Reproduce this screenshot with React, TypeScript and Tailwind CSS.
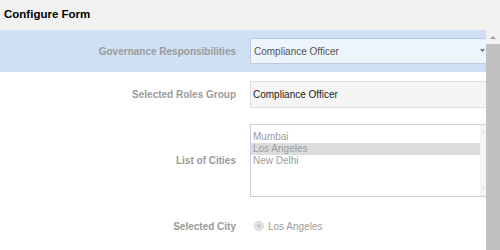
const cities = ['Mumbai', 'Los Angeles', 'New Delhi']

function Label({ text }: { text: string }) {
  return (
    <div className="w-[236px] shrink-0 text-right text-[10px] font-bold text-[#9a9a9a]">{text}</div>
  )
}

export default function App() {
  return (
    <div className="w-[500px] h-[250px] flex flex-col overflow-hidden bg-white font-['Liberation_Sans',Arial,sans-serif]">
      <div className="h-[30px] shrink-0 flex items-center px-[4px] bg-[#f1f1f1] text-[11.5px] font-bold text-black">
        Configure Form
      </div>
      <div className="flex flex-1 min-h-0">
        <div className="flex-1 overflow-hidden">
          {/* Governance Responsibilities */}
          <div className="h-[42px] flex items-center bg-[#cfe0f5]">
            <Label text="Governance Responsibilities" />
            <div className="relative ml-[14px] w-[238px] h-[26px] shrink-0 flex items-center pl-[3px] border border-[#b9cce4] bg-[#eef4fc] text-[10px] text-[#555]">
              Compliance Officer
              <span className="absolute right-[3px] top-[9px] w-[3px] h-[3px] border-r border-b border-[#333] rotate-45" />
            </div>
          </div>

          {/* Selected Roles Group */}
          <div className="h-[45px] flex items-center">
            <Label text="Selected Roles Group" />
            <div className="ml-[14px] w-[238px] h-[27px] shrink-0 flex items-center pl-[2px] border border-[#dedede] bg-[#f5f5f5] text-[10px] text-[#222]">
              Compliance Officer
            </div>
          </div>

          {/* List of Cities */}
          <div className="h-[87px] flex items-center">
            <Label text="List of Cities" />
            <div className="ml-[14px] w-[238px] h-[73px] shrink-0 flex border border-[#c6d1e2] bg-white">
              <div className="flex-1 pt-[6px]">
                {cities.map((c) => (
                  <div
                    key={c}
                    className={`h-[12px] leading-[12px] pl-[2px] text-[10px] text-[#9c9c9c] ${c === 'Los Angeles' ? 'bg-[#dcdcdc]' : ''}`}
                  >
                    {c}
                  </div>
                ))}
              </div>
              <div className="w-[6px] bg-[#f4f4f4] flex flex-col justify-between items-center py-[7px] mr-[1px]">
                <span className="w-[1px] h-[1px] bg-[#aaa]" />
                <span className="w-[1px] h-[1px] bg-[#aaa]" />
              </div>
            </div>
          </div>

          {/* Selected City */}
          <div className="h-[44px] flex items-center">
            <Label text="Selected City" />
            <div className="ml-[18px] flex items-center gap-[4px] text-[10px] text-[#9c9c9c]">
              <span className="w-[10px] h-[10px] rounded-full bg-[#e4e4e4] border border-[#d4d4d4] flex items-center justify-center">
                <span className="w-[4px] h-[4px] rounded-full bg-[#c8c8c8]" />
              </span>
              Los Angeles
            </div>
          </div>
        </div>

        {/* page scrollbar */}
        <div className="w-[14px] shrink-0 flex flex-col bg-[#f1f1f1]">
          <div className="h-[14px] flex items-center justify-center">
            <span className="w-0 h-0 border-l-[3px] border-r-[3px] border-b-[3px] border-l-transparent border-r-transparent border-b-[#a3a3a3]" />
          </div>
          <div className="flex-1 bg-[#c1c1c1]" />
        </div>
      </div>
    </div>
  )
}
